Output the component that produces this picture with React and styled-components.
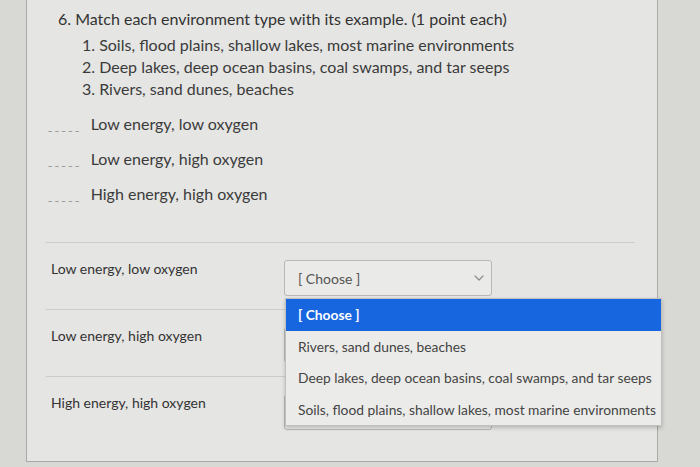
import React from "react";
import styled, { createGlobalStyle } from "styled-components";

const Global = createGlobalStyle`
  body {
    margin: 0;
    background: #d8d8d5;
    font-family: Lato, "Liberation Sans", sans-serif;
    color: #3b3b3b;
  }
`;

const items = [
  "Soils, flood plains, shallow lakes, most marine environments",
  "Deep lakes, deep ocean basins, coal swamps, and tar seeps",
  "Rivers, sand dunes, beaches",
];

const types = ["Low energy, low oxygen", "Low energy, high oxygen", "High energy, high oxygen"];

const options = ["[ Choose ]", items[2], items[1], items[0]];

const Chevron = () => (
  <svg width="10" height="6" viewBox="0 0 10 6" fill="none">
    <path d="M1 1l4 4 4-4" stroke="#8a8a8a" strokeWidth="1.2" strokeLinecap="round" strokeLinejoin="round" />
  </svg>
);

const App = () => {
  return (
    <>
      <Global />
      <Page>
        <Card>
          <Question>
            <Title>6. Match each environment type with its example. (1 point each)</Title>
            <List>
              {items.map((it, i) => (
                <li key={i}>
                  {i + 1}. {it}
                </li>
              ))}
            </List>
          </Question>

          <Blanks>
            {types.map((t) => (
              <Blank key={t}>
                <Dashes>_____</Dashes>
                <span>{t}</span>
              </Blank>
            ))}
          </Blanks>

          <Answers>
            {types.map((t, i) => (
              <Row key={t}>
                <Label>{t}</Label>
                <Select>
                  <span>[ Choose ]</span>
                  <Chevron />
                  {i === 0 && (
                    <Menu>
                      {options.map((o, j) => (
                        <Option key={o} active={j === 0}>
                          {o}
                        </Option>
                      ))}
                    </Menu>
                  )}
                </Select>
              </Row>
            ))}
          </Answers>
        </Card>
      </Page>
    </>
  );
};

const Page = styled.div`
  width: 700px;
  height: 467px;
  overflow: hidden;
  padding-left: 26px;
  box-sizing: border-box;
`;

const Card = styled.div`
  width: 632px;
  height: 462px;
  box-sizing: border-box;
  background: #e5e5e3;
  border: 1px solid #a9a9a7;
  border-top: none;
  display: flex;
  flex-direction: column;
`;

const Question = styled.div`
  padding: 8px 0 0 31px;
  font-size: 16px;
  line-height: 22px;
`;

const Title = styled.div`
  color: #333;
`;

const List = styled.ol`
  list-style: none;
  margin: 4px 0 0;
  padding-left: 24px;
  li {
    line-height: 22px;
  }
`;

const Blanks = styled.div`
  padding: 13px 0 0 21px;
  display: flex;
  flex-direction: column;
  gap: 13px;
`;

const Blank = styled.div`
  display: flex;
  align-items: center;
  height: 22px;
  gap: 9px;
  font-size: 16px;
  line-height: 22px;
`;

const Dashes = styled.span`
  font-size: 9px;
  line-height: 1;
  letter-spacing: 2.6px;
  color: #777;
  margin-top: 4px;
`;

const Answers = styled.div`
  margin: 37px 22px 0 19px;
  border-top: 1px solid #cbcbc9;
`;

const Row = styled.div`
  display: flex;
  align-items: flex-start;
  height: 67px;
  box-sizing: border-box;
  border-bottom: 1px solid #cbcbc9;
  padding-top: 17px;
  &:last-child {
    border-bottom: none;
  }
`;

const Label = styled.div`
  width: 238px;
  padding-left: 5px;
  box-sizing: border-box;
  font-size: 14px;
  line-height: 18px;
  color: #333;
`;

const Select = styled.div`
  position: relative;
  width: 208px;
  height: 36px;
  box-sizing: border-box;
  border: 1px solid #b8b8b6;
  border-radius: 3px;
  background: #eaeae8;
  display: flex;
  align-items: center;
  justify-content: space-between;
  padding: 0 7px 0 13px;
  font-size: 14px;
  color: #555;
`;

const Menu = styled.div`
  position: absolute;
  top: 37px;
  left: 0;
  width: 375px;
  background: #ebebe9;
  border: 1px solid #c0c0be;
  box-shadow: 0 2px 4px rgba(0, 0, 0, 0.2);
  z-index: 2;
`;

const Option = styled.div`
  height: 31.5px;
  display: flex;
  align-items: center;
  padding-left: 12px;
  font-size: 13.8px;
  white-space: nowrap;
  color: ${(p) => (p.active ? "#fff" : "#444")};
  background: ${(p) => (p.active ? "#1766e0" : "transparent")};
  font-weight: ${(p) => (p.active ? 700 : 400)};
`;

export default App;
